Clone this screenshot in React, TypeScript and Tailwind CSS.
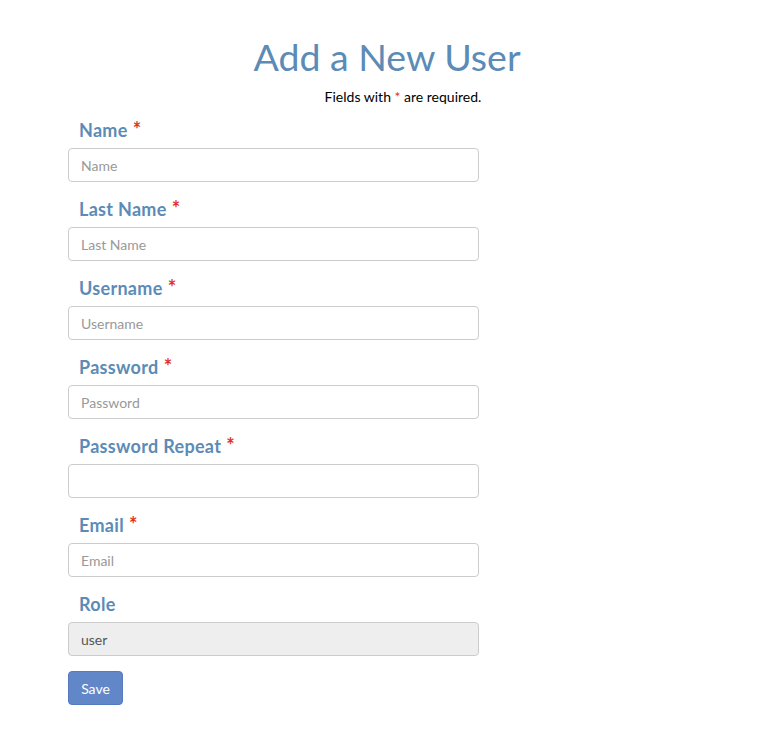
import React from "react";

const fields = [
  { label: "Name", placeholder: "Name", required: true },
  { label: "Last Name", placeholder: "Last Name", required: true },
  { label: "Username", placeholder: "Username", required: true },
  { label: "Password", placeholder: "Password", required: true },
  { label: "Password Repeat", placeholder: "", required: true },
  { label: "Email", placeholder: "Email", required: true },
];

export default function App() {
  return (
    <div className="min-h-screen bg-white font-['Lato','Liberation_Sans',sans-serif]">
      <div className="pt-[35px]">
        <h1 className="text-center text-[37.5px] leading-[44px] text-[#5b8bb6]">
          Add a New User
        </h1>
        <p className="pl-[32px] text-center text-[14px] leading-[18px] text-black mt-[9px]">
          Fields with <span className="text-[#e2321f]">*</span> are required.
        </p>
      </div>

      <form className="ml-[68px] w-[411px] mt-[12px]" onSubmit={(e) => e.preventDefault()}>
        {fields.map((f) => (
          <div key={f.label} className="mb-[15px]">
            <label className="block h-[24px] pl-[11px] text-[18px] leading-[24px] font-bold tracking-[0.3px] text-[#5b8bb6] mb-[6px]">
              {f.label}
              {f.required && <span className="text-[#e2321f] text-[20px] leading-none"> *</span>}
            </label>
            <input
              type="text"
              placeholder={f.placeholder}
              className="block w-full h-[34px] px-[12px] text-[14px] text-[#555] border border-[#ccc] rounded-[4px] bg-white placeholder:text-[#999] outline-none"
            />
          </div>
        ))}
        <div className="mb-[15px]">
          <label className="block h-[24px] pl-[11px] text-[18px] leading-[24px] font-bold tracking-[0.3px] text-[#5b8bb6] mb-[6px]">
            Role
          </label>
          <input
            type="text"
            value="user"
            readOnly
            className="block w-full h-[34px] px-[12px] text-[14px] text-[#555] border border-[#ccc] rounded-[4px] bg-[#eeeeee] outline-none"
          />
        </div>
        <button
          type="submit"
          className="h-[34px] w-[55px] rounded-[4px] bg-[#6287c9] border border-[#557abf] text-white text-[14px]"
        >
          Save
        </button>
      </form>
    </div>
  );
}
